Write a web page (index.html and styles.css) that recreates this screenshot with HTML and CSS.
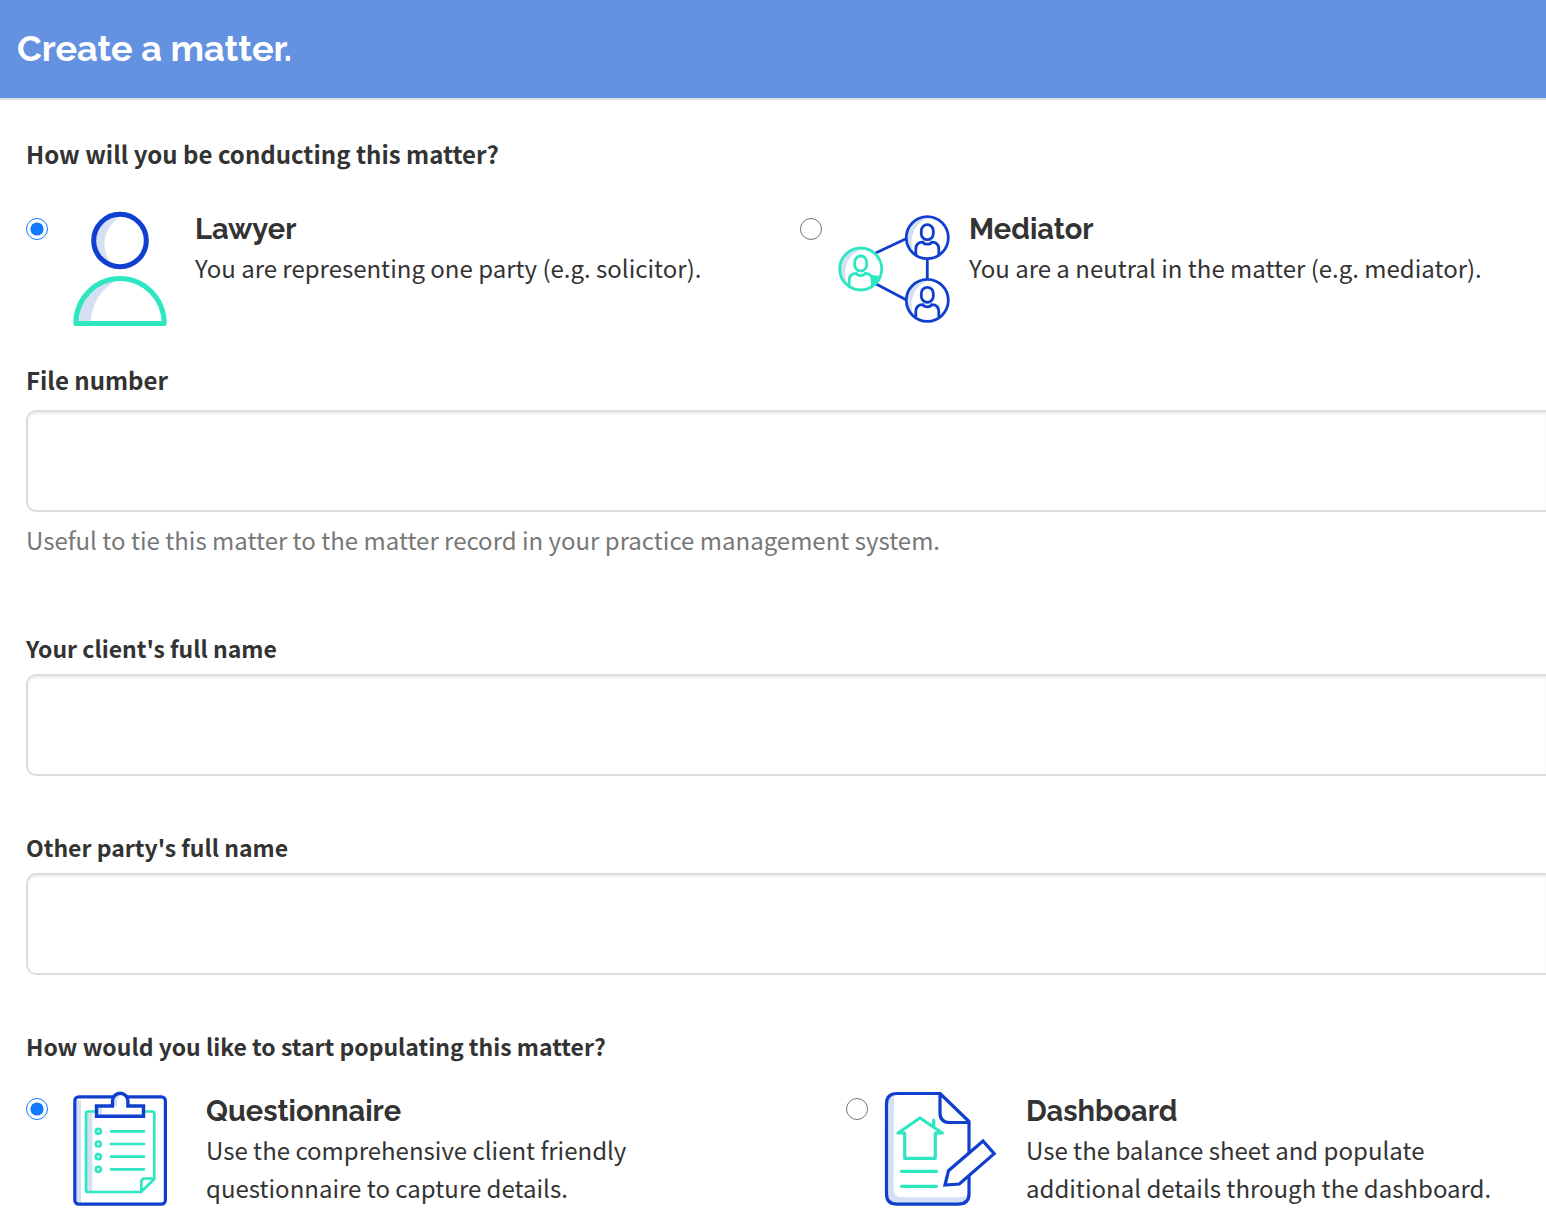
FILE: index.html
```
<!DOCTYPE html>
<html lang="en">
<head>
    <meta charset="UTF-8">
    <meta name="viewport" content="width=device-width, initial-scale=1.0">
    <title>Create a matter</title>
    <link rel="stylesheet" href="styles.css">
</head>
<body>
    <header class="page-header">
        <h1>Create a matter.</h1>
    </header>

    <form class="matter-form">
        <fieldset class="choice-group">
            <legend class="question">How will you be conducting this matter?</legend>
            <div class="options role-options">
                <label class="option">
                    <input type="radio" name="role" value="lawyer" checked>
                    <svg class="option-icon" viewBox="0 0 120 120" fill="none" stroke-width="5" stroke-linejoin="round" aria-hidden="true">
                        <path class="shade" d="M60 5.5A26 26 0 0 0 54 57C40 45 40 17 64 6z"/>
                        <circle class="blue" cx="60" cy="31.5" r="26.3"/>
                        <path class="shade" d="M15.8 114.5A44.2 45 0 0 1 60 69.5C42 78 31 95 31 114.5z"/>
                        <path class="teal" d="M15.8 114.5A44.2 45 0 0 1 104.2 114.5z"/>
                    </svg>
                    <span class="option-text">
                        <span class="option-title">Lawyer</span>
                        <span class="option-desc">You are representing one party (e.g. solicitor).</span>
                    </span>
                </label>
                <label class="option">
                    <input type="radio" name="role" value="mediator">
                    <svg class="option-icon" viewBox="0 0 120 120" fill="none" stroke-width="2.8" aria-hidden="true">
                        <defs>
                            <g id="person">
                                <path class="shade" d="M2 -20A20 20 0 0 0 -14 14C-18 2 -15 -14 2 -20z"/>
                                <circle r="21"/>
                                <rect x="-6" y="-13" width="12" height="15" rx="6"/>
                                <path d="M-11.5 17V11.5C-11.5 6.5 -8.5 4.4 -4.5 4.4C-3 7.2 3 7.2 4.5 4.4C8.5 4.4 11.5 6.5 11.5 11.5V17"/>
                            </g>
                        </defs>
                        <path class="blue" d="M41.7 44L72 29.7M93.3 49.7V70.3M41.7 74.7L72 90.7"/>
                        <use class="blue" href="#person" x="93.3" y="28.7"/>
                        <use class="blue" href="#person" x="93.3" y="91.3"/>
                        <use class="teal" href="#person" x="26.7" y="60"/>
                        <path class="teal-fill" d="M37 66L47 67Q44 75 38 78z"/>
                    </svg>
                    <span class="option-text">
                        <span class="option-title">Mediator</span>
                        <span class="option-desc">You are a neutral in the matter (e.g. mediator).</span>
                    </span>
                </label>
            </div>
        </fieldset>

        <div class="field file-field">
            <label class="question" for="fileNumber">File number</label>
            <input type="text" id="fileNumber" aria-describedby="fileHelp">
            <p class="help" id="fileHelp">Useful to tie this matter to the matter record in your practice management system.</p>
        </div>

        <div class="field">
            <label for="clientName">Your client's full name</label>
            <input type="text" id="clientName">
        </div>

        <div class="field">
            <label for="otherName">Other party's full name</label>
            <input type="text" id="otherName">
        </div>

        <fieldset class="choice-group">
            <legend>How would you like to start populating this matter?</legend>
            <div class="options start-options">
                <label class="option">
                    <input type="radio" name="start" value="questionnaire" checked>
                    <svg class="option-icon" viewBox="0 0 120 120" fill="none" stroke-width="2.7" stroke-linecap="round" stroke-linejoin="round" aria-hidden="true">
                        <path class="shade" d="M16 11H21V115H16zM27 24H32.3V102H27z"/>
                        <rect class="blue" stroke-width="3.2" x="14.8" y="7.8" width="90.6" height="107.4" rx="4"/>
                        <path class="teal" d="M35 22.5H28Q26 22.5 26 24.5V101Q26 103 28 103H81L94.3 90V24.5Q94.3 22.5 92.3 22.5H85M81.3 103V93Q81.3 89.5 84.8 89.5H94"/>
                        <path class="paper" d="M36.5 27.3V17H52.5V12A7.7 7.7 0 0 1 67.9 12V17H83.5V27.3z"/>
                        <path class="shade" d="M37.5 18H42V26.5H37.5zM53.5 17V12Q54 5.5 61 5.5Q56 9 57.5 17z"/>
                        <path class="blue" stroke-linejoin="miter" stroke-width="3.4" d="M36.5 27.3V17H52.5V12A7.7 7.7 0 0 1 67.9 12V17H83.5V27.3z"/>
                        <g class="teal">
                            <circle cx="38.3" cy="42.3" r="2.5"/>
                            <circle cx="38.3" cy="55" r="2.5"/>
                            <circle cx="38.3" cy="67.7" r="2.5"/>
                            <circle cx="38.3" cy="80.3" r="2.5"/>
                            <path d="M51 42.3H84M51 55H84M51 67.7H84M51 80.3H84"/>
                        </g>
                    </svg>
                    <span class="option-text">
                        <span class="option-title">Questionnaire</span>
                        <span class="option-desc">Use the comprehensive client friendly questionnaire to capture details.</span>
                    </span>
                </label>
                <label class="option">
                    <input type="radio" name="start" value="dashboard">
                    <svg class="option-icon" viewBox="0 0 120 120" fill="none" stroke-width="3.2" stroke-linecap="round" stroke-linejoin="round" aria-hidden="true">
                        <path class="shade" d="M14 5Q6.5 7 6.5 15V105Q6.5 115 17 115H78Q88 115 89 105Q86 108.3 80 108.3H22Q13.5 108.3 13.5 99z"/>
                        <path class="blue" d="M60 4.5H17Q6.5 4.5 6.5 15V105Q6.5 115.2 17 115.2H78Q89 115.2 89 105V32.5L60 4.5V24Q60 33.5 70 33.5H89"/>
                        <path class="teal" d="M24.7 44H18L40 29L62.3 44H55.3V69.3H24.7zM53.7 31V37M21.5 82.3H56.5M21.5 97.3H56.5"/>
                        <path class="paper blue" stroke-linejoin="miter" d="M65 96L68.5 81.7L103 52L114.2 64.7L79.3 95z"/>
                    </svg>
                    <span class="option-text">
                        <span class="option-title">Dashboard</span>
                        <span class="option-desc">Use the balance sheet and populate additional details through the dashboard.</span>
                    </span>
                </label>
            </div>
        </fieldset>
    </form>
</body>
</html>
```
FILE: styles.css
```
* {
    box-sizing: border-box;
}

body {
    margin: 0;
    background: #fff;
    color: #333;
    font-family: "Source Sans Pro", "Noto Sans CJK SC", sans-serif;
    font-size: 24px;
    line-height: 40px;
}

.page-header {
    background: #6492e0;
    border-bottom: 2px solid #dfe1e6;
    padding: 24px 17px 26px;
}

.page-header h1 {
    margin: 0;
    color: #fff;
    font-family: Raleway, Lato, sans-serif;
    font-size: 36px;
    font-weight: 700;
    line-height: 48px;
}

.matter-form {
    padding: 34px 0 22px 26px;
}

.choice-group {
    border: 0;
    margin: 0;
    padding: 0;
    min-width: 0;
}

legend,
.field label {
    display: block;
    padding: 0;
    font-size: 23px;
    font-weight: 700;
}

legend.question,
.field label.question {
    font-size: 24px;
}

.options {
    display: grid;
    padding-top: 23px;
}

.role-options {
    grid-template-columns: 774fr 746fr;
    padding-top: 35px;
    padding-bottom: 31px;
}

.start-options {
    grid-template-columns: 820fr 700fr;
}

.option {
    display: flex;
    align-items: flex-start;
    cursor: pointer;
}

.option input {
    flex: none;
    width: 22px;
    height: 22px;
    margin: 9px 12px 0 0;
    accent-color: #147bff;
}

.option-icon {
    flex: none;
    width: 120px;
    height: 120px;
}

.option-text {
    padding-left: 15px;
}

.start-options .option-text {
    max-width: 510px;
    padding: 2px 0 0 26px;
}

.option-title,
.option-desc {
    display: block;
}

.option-title {
    font-family: Raleway, Lato, sans-serif;
    font-size: 29px;
    font-weight: 700;
}

.option-desc {
    line-height: 38px;
}

.field {
    margin-bottom: 51px;
}

/* inputs run on past the right edge of the window */
.field input {
    display: block;
    width: 100%;
    height: 102px;
    margin-top: 6px;
    padding: 0 24px;
    border: 2px solid #ddd;
    border-right: 0;
    border-radius: 10px 0 0 10px;
    box-shadow: inset 0 2px 2px rgba(0, 0, 0, 0.07);
    background: #fff;
    color: #333;
    font: inherit;
}

.file-field {
    margin-bottom: 68px;
}

.file-field input {
    margin-top: 10px;
}

.help {
    margin: 8px 0 0;
    color: #777;
}

/* icon colours */
.blue {
    stroke: #103fcf;
}

.teal {
    stroke: #2ee6c0;
}

.teal-fill {
    fill: #2ee6c0;
}

.shade {
    fill: #d5e0f3;
    stroke: none;
}

.paper {
    fill: #fff;
}
```
